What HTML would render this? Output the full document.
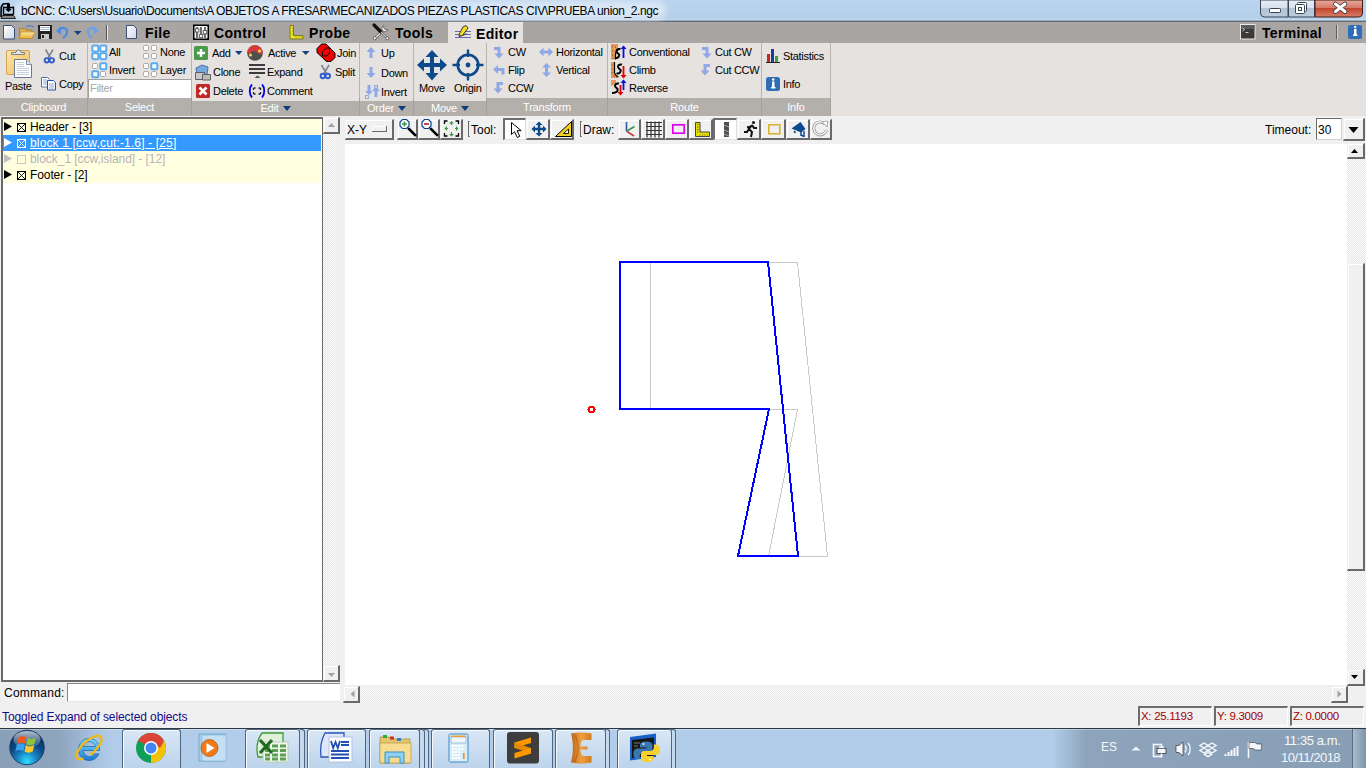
<!DOCTYPE html>
<html><head><meta charset="utf-8">
<style>
*{box-sizing:border-box}
html,body{margin:0;padding:0}
body{width:1366px;height:768px;position:relative;overflow:hidden;background:#f0f0f0;font-family:"Liberation Sans",sans-serif;font-size:12px;color:#000}
.a{position:absolute}
.t{position:absolute;white-space:nowrap;line-height:14px}
#title{left:0;top:0;width:1366px;height:22px;background:linear-gradient(to bottom,#bcd5ee 0,#b3cfea 19px,#d8e6f3 20px,#5f6b78 21px,#5f6b78 22px)}
#tabs{left:0;top:22px;width:1366px;height:21px;background:#a9a5a2}
#ribbon{left:0;top:43px;width:1366px;height:73px;background:#e6e2df}
.glabel{position:absolute;top:98px;height:18px;background:#b3afab;color:#fff;text-align:center;line-height:18px;font-size:11px;letter-spacing:-0.2px}
.gsep{position:absolute;top:43px;width:1px;height:73px;background:linear-gradient(#b8b4b0 0,#b8b4b0 55px,#a4a09c 55px)}
.tri{font-size:10px}
.tab{position:absolute;font-weight:bold;font-size:14px;line-height:16px;white-space:nowrap;letter-spacing:0.35px}
.rb{position:absolute;white-space:nowrap;line-height:14px;font-size:11px;letter-spacing:-0.3px}
.btn3d{position:absolute;background:#f0f0f0;border-top:1px solid #f0f0f0;border-left:1px solid #f0f0f0;border-right:2px solid #696969;border-bottom:2px solid #696969;box-shadow:inset 1px 1px 0 #fff}
.sunk{position:absolute;background:#fff;border-top:2px solid #696969;border-left:2px solid #696969;border-right:1px solid #f0f0f0;border-bottom:1px solid #f0f0f0}
.trough{position:absolute;background-color:#f4f4f4;background-image:repeating-conic-gradient(#e8e8e8 0 25%,#fafafa 0 50%);background-size:2px 2px}
.row{position:absolute;left:3px;width:318px;height:16px;line-height:16px;white-space:nowrap}
#taskbar{left:0;top:728px;width:1366px;height:40px;background:linear-gradient(to right,#8ea4bb 0px,#9cb6d1 40px,#b0cce9 75px,#b0cce9 1080px,#8ca2b9 1110px,#899fb6 1366px);border-top:1px solid #3b4856}
.tb{position:absolute;top:729px;height:39px;border:1px solid #4f6580;border-bottom:none;border-radius:3px 3px 0 0;background:linear-gradient(#d9e7f5,#bcd4ec);box-shadow:inset 1px 1px 0 rgba(255,255,255,0.8)}
.tbs{position:absolute;top:729px;height:39px;border:1px solid #4f6580;border-left:none;border-bottom:none;border-radius:0 3px 0 0;background:#c4d8ee}
.tbtn{position:absolute;top:729px;height:39px;border:1px solid #5e7694;border-radius:3px;background:linear-gradient(#cfe0f1,#b9d2ec)}
</style></head><body>

<!-- Title bar -->
<div id="title" class="a"></div>
<div class="a" style="left:14px;top:1px;width:652px;height:19px;border-radius:9px;background:rgba(228,238,248,0.75);filter:blur(3px)"></div>
<div class="t" style="left:21px;top:4px;font-size:12px;letter-spacing:-0.39px;color:#000">bCNC: C:\Users\Usuario\Documents\A OBJETOS A FRESAR\MECANIZADOS PIEZAS PLASTICAS CIV\PRUEBA union_2.ngc</div>

<!-- Tab bar -->
<div id="tabs" class="a"></div>
<div class="tab" style="left:145px;top:25px">File</div>
<div class="tab" style="left:214px;top:25px">Control</div>
<div class="tab" style="left:309px;top:25px">Probe</div>
<div class="tab" style="left:395px;top:25px">Tools</div>
<div class="a" style="left:448px;top:22px;width:75px;height:21px;background:#e6e2df"></div>
<div class="tab" style="left:476px;top:26px">Editor</div>
<div class="tab" style="left:1262px;top:25px">Terminal</div>

<!-- Ribbon -->
<div id="ribbon" class="a"></div>
<div class="glabel" style="left:0;width:87px">Clipboard</div>
<div class="glabel" style="left:88px;width:103px">Select</div>
<div class="glabel" style="left:192px;width:167px;top:101px;height:15px;line-height:14px">Edit<span style="display:inline-block;width:0;height:0;border-left:4px solid transparent;border-right:4px solid transparent;border-top:5px solid #0d3c7c;vertical-align:1px;margin-left:4px"></span></div>
<div class="glabel" style="left:360px;width:53px;top:101px;height:15px;line-height:14px">Order<span style="display:inline-block;width:0;height:0;border-left:4px solid transparent;border-right:4px solid transparent;border-top:5px solid #0d3c7c;vertical-align:1px;margin-left:4px"></span></div>
<div class="glabel" style="left:414px;width:72px;top:101px;height:15px;line-height:14px">Move<span style="display:inline-block;width:0;height:0;border-left:4px solid transparent;border-right:4px solid transparent;border-top:5px solid #0d3c7c;vertical-align:1px;margin-left:4px"></span></div>
<div class="glabel" style="left:487px;width:120px">Transform</div>
<div class="glabel" style="left:608px;width:153px">Route</div>
<div class="glabel" style="left:762px;width:68px">Info</div>
<div class="gsep" style="left:87px"></div>
<div class="gsep" style="left:191px"></div>
<div class="gsep" style="left:359px"></div>
<div class="gsep" style="left:413px"></div>
<div class="gsep" style="left:486px"></div>
<div class="gsep" style="left:607px"></div>
<div class="gsep" style="left:761px"></div>
<div class="gsep" style="left:830px"></div>

<div class="rb" style="left:5px;top:79px">Paste</div>
<div class="rb" style="left:59px;top:49px">Cut</div>
<div class="rb" style="left:59px;top:77px">Copy</div>
<div class="rb" style="left:109px;top:45px">All</div>
<div class="rb" style="left:160px;top:45px">None</div>
<div class="rb" style="left:109px;top:63px">Invert</div>
<div class="rb" style="left:160px;top:63px">Layer</div>
<div class="a" style="left:88px;top:79px;width:103px;height:19px;background:#fff;border-top:1px solid #a0a0a0;border-left:1px solid #a0a0a0"></div>
<div class="rb" style="left:90px;top:81px;color:#a8a8a8">Filter</div>

<div class="rb" style="left:212px;top:46px">Add</div>
<div class="rb" style="left:268px;top:46px">Active</div>
<div class="rb" style="left:337px;top:46px">Join</div>
<div class="rb" style="left:213px;top:65px">Clone</div>
<div class="rb" style="left:267px;top:65px">Expand</div>
<div class="rb" style="left:335px;top:65px">Split</div>
<div class="rb" style="left:213px;top:84px">Delete</div>
<div class="rb" style="left:267px;top:84px">Comment</div>

<div class="rb" style="left:381px;top:46px">Up</div>
<div class="rb" style="left:381px;top:66px">Down</div>
<div class="rb" style="left:381px;top:85px">Invert</div>
<div class="rb" style="left:419px;top:81px">Move</div>
<div class="rb" style="left:454px;top:81px">Origin</div>

<div class="rb" style="left:508px;top:45px">CW</div>
<div class="rb" style="left:556px;top:45px">Horizontal</div>
<div class="rb" style="left:508px;top:63px">Flip</div>
<div class="rb" style="left:556px;top:63px">Vertical</div>
<div class="rb" style="left:508px;top:81px">CCW</div>

<div class="rb" style="left:629px;top:45px">Conventional</div>
<div class="rb" style="left:715px;top:45px">Cut CW</div>
<div class="rb" style="left:629px;top:63px">Climb</div>
<div class="rb" style="left:715px;top:63px">Cut CCW</div>
<div class="rb" style="left:629px;top:81px">Reverse</div>
<div class="rb" style="left:783px;top:49px">Statistics</div>
<div class="rb" style="left:783px;top:77px">Info</div>

<!-- main area -->
<div class="a" style="left:1px;top:117px;width:322px;height:565px;background:#fff;border:2px solid #696969;border-right-width:1px"></div>
<div class="a" style="left:3px;top:119px;width:318px;height:64px;background:#ffffe0"></div>
<div class="a" style="left:3px;top:135px;width:318px;height:16px;background:#3399ff"></div>
<div class="t" style="left:30px;top:120px;font-size:12px;letter-spacing:-0.1px">Header - [3]</div>
<div class="t" style="left:30px;top:136px;font-size:12px;letter-spacing:0.15px;color:#fff;text-decoration:underline">block 1 [ccw,cut:-1.6] - [25]</div>
<div class="t" style="left:30px;top:152px;font-size:12px;letter-spacing:-0.05px;color:#b8b4b8">block_1 [ccw,island] - [12]</div>
<div class="t" style="left:30px;top:168px;font-size:12px;letter-spacing:-0.1px">Footer - [2]</div>

<!-- tree scrollbar -->
<div class="trough" style="left:323px;top:117px;width:17px;height:565px"></div>
<div class="btn3d" style="left:323px;top:117px;width:17px;height:17px"></div>
<div class="btn3d" style="left:323px;top:665px;width:17px;height:17px"></div>

<!-- canvas toolbar -->
<div class="btn3d" style="left:345px;top:119px;width:49px;height:21px"></div>
<div class="t" style="left:347px;top:123px;font-size:12px">X-Y</div>
<div class="btn3d" style="left:397px;top:119px;width:21px;height:21px"></div>
<div class="btn3d" style="left:418px;top:119px;width:22px;height:21px"></div>
<div class="btn3d" style="left:440px;top:119px;width:23px;height:21px"></div>
<div class="t" style="left:471px;top:123px;font-size:12px">Tool:</div>
<div class="a" style="left:503px;top:118px;width:23px;height:22px;background:#fff;border-top:2px solid #6d6d6d;border-left:2px solid #6d6d6d;border-bottom:1px solid #e0e0e0;border-right:1px solid #e0e0e0"></div>
<div class="btn3d" style="left:526px;top:119px;width:24px;height:21px"></div>
<div class="btn3d" style="left:550px;top:119px;width:24px;height:21px"></div>
<div class="t" style="left:583px;top:123px;font-size:12px">Draw:</div>
<div class="btn3d" style="left:618px;top:119px;width:23px;height:21px"></div>
<div class="btn3d" style="left:641px;top:119px;width:24px;height:21px"></div>
<div class="btn3d" style="left:665px;top:119px;width:24px;height:21px"></div>
<div class="btn3d" style="left:689px;top:119px;width:24px;height:21px"></div>
<div class="a" style="left:713px;top:118px;width:24px;height:22px;background:#fff;border-top:2px solid #6d6d6d;border-left:2px solid #6d6d6d;border-bottom:1px solid #e0e0e0;border-right:1px solid #e0e0e0"></div>
<div class="btn3d" style="left:737px;top:119px;width:24px;height:21px"></div>
<div class="btn3d" style="left:761px;top:119px;width:25px;height:21px"></div>
<div class="btn3d" style="left:786px;top:119px;width:24px;height:21px"></div>
<div class="btn3d" style="left:810px;top:119px;width:22px;height:21px"></div>
<div class="t" style="left:1265px;top:123px;font-size:12px">Timeout:</div>
<div class="a" style="left:1316px;top:118px;width:26px;height:22px;background:#fff;border-top:1px solid #6d6d6d;border-left:1px solid #6d6d6d;border-bottom:1px solid #d0d0d0;border-right:1px solid #d0d0d0"></div>
<div class="t" style="left:1318px;top:123px;font-size:12px">30</div>
<div class="btn3d" style="left:1343px;top:118px;width:22px;height:23px"></div>

<!-- canvas -->
<div class="a" style="left:345px;top:144px;width:1002px;height:541px;background:#fff"></div>
<!-- canvas v scrollbar -->
<div class="trough" style="left:1347px;top:143px;width:18px;height:543px"></div>
<div class="btn3d" style="left:1347px;top:143px;width:18px;height:16px"></div>
<div class="btn3d" style="left:1347px;top:263px;width:18px;height:308px"></div>
<div class="btn3d" style="left:1347px;top:669px;width:18px;height:17px"></div>
<!-- canvas h scrollbar -->
<div class="trough" style="left:343px;top:686px;width:1005px;height:17px"></div>
<div class="btn3d" style="left:343px;top:686px;width:17px;height:17px"></div>
<div class="btn3d" style="left:1331px;top:686px;width:17px;height:17px"></div>

<!-- command -->
<div class="t" style="left:4px;top:686px;font-size:12px;letter-spacing:0.25px">Command:</div>
<div class="a" style="left:67px;top:683px;width:273px;height:19px;background:#fff;border-top:1px solid #868686;border-left:1px solid #868686;border-bottom:1px solid #e8e8e8"></div>

<!-- status -->
<div class="t" style="left:2px;top:710px;font-size:12px;letter-spacing:-0.1px;color:#140a8a">Toggled Expand of selected objects</div>
<div class="a" style="left:1138px;top:706px;width:74px;height:20px;border-top:2px solid #6d6d6d;border-left:2px solid #6d6d6d;border-right:1px solid #fff;border-bottom:1px solid #fff"></div>
<div class="a" style="left:1214px;top:706px;width:74px;height:20px;border-top:2px solid #6d6d6d;border-left:2px solid #6d6d6d;border-right:1px solid #fff;border-bottom:1px solid #fff"></div>
<div class="a" style="left:1290px;top:706px;width:74px;height:20px;border-top:2px solid #6d6d6d;border-left:2px solid #6d6d6d;border-right:1px solid #fff;border-bottom:1px solid #fff"></div>
<div class="t" style="left:1141px;top:709px;font-size:11.5px;letter-spacing:-0.3px;color:#a00000">X: 25.1193</div>
<div class="t" style="left:1217px;top:709px;font-size:11.5px;letter-spacing:-0.3px;color:#a00000">Y: 9.3009</div>
<div class="t" style="left:1293px;top:709px;font-size:11.5px;letter-spacing:-0.3px;color:#a00000">Z: 0.0000</div>

<!-- taskbar -->
<div class="a" style="left:0;top:728px;width:1366px;height:40px;background:linear-gradient(to right,#8aa0b8 0px,#8ea5bd 60px,#a7c2df 95px,#b1cde9 115px,#b1cde9 1052px,#8ea4bc 1086px,#889eb5 1366px)"></div>
<div class="a" style="left:0;top:728px;width:1366px;height:1px;background:#2c3742"></div>
<div class="a" style="left:0;top:729px;width:1366px;height:1px;background:rgba(255,255,255,0.35)"></div>
<div class="tb" style="left:122px;width:59px"></div>
<div class="tbs" style="left:300px;width:5px"></div>
<div class="tb" style="left:245px;width:55px"></div>
<div class="tb" style="left:307px;width:59px"></div>
<div class="tbs" style="left:423px;width:6px"></div>
<div class="tbs" style="left:419px;width:6px"></div>
<div class="tb" style="left:369px;width:51px"></div>
<div class="tb" style="left:431px;width:59px"></div>
<div class="tb" style="left:493px;width:60px"></div>
<div class="tbs" style="left:605px;width:5px"></div>
<div class="tb" style="left:555px;width:51px"></div>
<div class="tbs" style="left:671px;width:5px"></div>
<div class="tb" style="left:617px;width:55px"></div>
<div class="a" style="left:1352px;top:729px;width:14px;height:39px;border-left:1px solid #5e6f80;background:linear-gradient(to right,#a9bccf,#7f94aa)"></div>
<div class="t" style="left:1101px;top:740px;font-size:12px;color:#f4f8fc">ES</div>
<div class="t" style="left:1284px;top:734px;font-size:13px;color:#f4f8fc;letter-spacing:-0.4px">11:35 a.m.</div>
<div class="t" style="left:1281px;top:751px;font-size:13px;color:#f4f8fc;letter-spacing:-0.5px">10/11/2018</div>
<svg class="a" style="left:0;top:0" width="1366" height="768" viewBox="0 0 1366 768">
<defs>
<radialGradient id="orb" cx="0.5" cy="0.9" r="0.75"><stop offset="0" stop-color="#30e0f8"/><stop offset="0.35" stop-color="#1a8ac8"/><stop offset="0.7" stop-color="#0c4a88"/><stop offset="1" stop-color="#0a3060"/></radialGradient>
<linearGradient id="orbhi" x1="0" y1="0" x2="0" y2="1"><stop offset="0" stop-color="#fff" stop-opacity="0.7"/><stop offset="1" stop-color="#fff" stop-opacity="0.05"/></linearGradient>
<linearGradient id="ieg" x1="0" y1="0" x2="0" y2="1"><stop offset="0" stop-color="#7ee0ff"/><stop offset="1" stop-color="#1a78d0"/></linearGradient>
<linearGradient id="eg" x1="0" y1="0" x2="1" y2="0"><stop offset="0" stop-color="#b8641a"/><stop offset="0.5" stop-color="#f0a040"/><stop offset="1" stop-color="#d07a20"/></linearGradient>
</defs>
<!-- start orb -->
<circle cx="27" cy="747.5" r="18" fill="#c8d8e8" opacity="0.35"/>
<circle cx="27" cy="747.5" r="17.3" fill="url(#orb)" stroke="#1d3f66" stroke-width="1"/>
<ellipse cx="27" cy="739.5" rx="13.5" ry="8.5" fill="url(#orbhi)"/>
<path d="M18.5 737.5c2.6-1.6 5.4-1.6 8 0l-1.3 6.3c-2.6-1.5-5.4-1.5-8 0z" fill="#f0581c"/>
<path d="M27.5 738c2.8 1.6 5.6 1.6 8.4-0.3l-1.3 6.3c-2.8 1.8-5.6 1.8-8.4 0.3z" fill="#8cc43a"/>
<path d="M16.8 744.8c2.6-1.6 5.4-1.6 8 0l-1.3 6.3c-2.6-1.5-5.4-1.5-8 0z" fill="#38a0ec"/>
<path d="M25.8 745.3c2.8 1.6 5.6 1.6 8.4-0.3l-1.3 6.3c-2.8 1.8-5.6 1.8-8.4 0.3z" fill="#fcc828"/>
<!-- IE -->
<path d="M99.5 750.5h-16.5c0.6 3.6 3 6 6.3 6 2.2 0 3.8-1 4.9-2.6h4.8c-1.8 4-5.6 6.6-9.9 6.6-5.9 0-10.6-4.9-10.6-11s4.7-11 10.6-11 10.6 4.9 10.6 11c0 0.3 0 0.7-0.2 1z M83.2 746.5h12.2c-0.8-3-3.2-5-6.1-5s-5.3 2-6.1 5z" fill="url(#ieg)" stroke="#1a60b0" stroke-width="0.7"/>
<ellipse cx="89" cy="747.5" rx="16" ry="6.5" transform="rotate(-42 89 747.5)" fill="none" stroke="#f2b80c" stroke-width="2.2" stroke-dasharray="62 8" stroke-dashoffset="-30"/>
<!-- chrome -->
<circle cx="151" cy="748" r="15" fill="#0f9d58"/>
<path d="M151 748L138 740.5A15 15 0 0 1 164 740.5z" fill="#db4437"/>
<path d="M151 748L164 740.5A15 15 0 0 1 151 763z" fill="#f4c20d"/>
<path d="M151 741.5h13L160 748z" fill="#db4437"/>
<circle cx="151" cy="748" r="7" fill="#fff"/>
<circle cx="151" cy="748" r="5.5" fill="#4285f4"/>
<!-- WMP -->
<rect x="199" y="734" width="26" height="27" fill="#a8d0ec" stroke="#6aa0c8" stroke-width="0.8"/>
<rect x="202" y="735" width="24" height="26" fill="#c4e0f4" stroke="#7ab0d4" stroke-width="0.6"/>
<circle cx="209.5" cy="748" r="8.5" fill="#f07a18" stroke="#c05a08" stroke-width="0.8"/>
<path d="M206.5 743v10l8-5z" fill="#fff"/>
<!-- excel -->
<path d="M262 733h21v24h-25c-2-8-1-17 4-24z" fill="#e2efdc" stroke="#3c9a32" stroke-width="1.3"/>
<path d="M263 742h25v20h-25z" fill="#f0f5ec" stroke="#b0c8a8" stroke-width="0.8"/>
<path d="M265 746h5M272 746h6M280 746h6M265 750.5h5M272 750.5h6M280 750.5h6M265 755h5M272 755h6M280 755h6M265 759h5M272 759h6M280 759h6" stroke="#5aa050" stroke-width="3"/>
<path d="M260 740l12 13M272 740l-12 13" stroke="#1f6a1f" stroke-width="3.2"/>
<!-- word -->
<path d="M325 733h19v24h-23c-1-8 0-17 4-24z" fill="#dfe7fa" stroke="#2a55b8" stroke-width="1.3"/>
<path d="M329 737h23v25h-23z" fill="#fbfcff" stroke="#a8b8d8" stroke-width="0.8"/>
<path d="M331 741l2.2 7 2.3-6 2.3 6 2.2-7" fill="none" stroke="#2050b0" stroke-width="1.8"/>
<path d="M341 742h8M341 745h8M331 751h18M331 754.5h18M331 758h18" stroke="#2050b0" stroke-width="1.8"/>
<!-- folder -->
<path d="M380 737h9l2 2h19v24h-30z" fill="#e6c46a" stroke="#a88a3a" stroke-width="0.7"/>
<rect x="383" y="735" width="4" height="3" fill="#30b030"/><rect x="390" y="736.5" width="4" height="3" fill="#d03020"/><rect x="397" y="738" width="4" height="3" fill="#3080d0"/>
<path d="M380 743h31v20h-31z" fill="#f6dd92" stroke="#b89a48" stroke-width="0.7"/>
<path d="M385 752h19v11h-4v-6h-11v6h-4z" fill="#8fd0f0" stroke="#3a90c8" stroke-width="1"/>
<!-- calc -->
<rect x="449" y="734" width="19" height="28" rx="1.5" fill="#d8ecf8" stroke="#3a8ac8" stroke-width="1"/>
<rect x="451" y="737" width="15" height="6" fill="#f0f6fa" stroke="#7aa8c8" stroke-width="0.6"/>
<rect x="451" y="735.5" width="15" height="1.5" fill="#f0a030"/>
<path d="M452 746h2M455 746h2M458 746h2M461 746h2M452 749h2M455 749h2M458 749h2M461 749h2M452 752h2M455 752h2M458 752h2M452 755h2M455 755h2M458 755h2M452 758h2M455 758h2M458 758h2" stroke="#fff" stroke-width="2"/>
<rect x="463" y="753" width="1.6" height="6" fill="#f09020"/>
<!-- sublime -->
<rect x="507" y="732" width="32" height="31.5" rx="3" fill="#3e3e3e"/>
<path d="M514.5 742.5L531 737.5V743L514.5 748Z" fill="#ff9800"/>
<path d="M514.5 742.5L531 748V753.5L514.5 748Z" fill="#e88a00"/>
<path d="M514.5 753L531 748V753.5L514.5 758.5Z" fill="#ff9800"/>
<!-- E -->
<path d="M571 733.5c7-1.5 14-1.5 20.5 0v6.5h-8.5c-2 1.5-2.5 4-2.5 6.5h7v3h-7c0 2.5 0.5 5 2.5 6.5h8.5v6.5c-6.5 1.5-13.5 1.5-20.5 0 2.5-9.5 2.5-20 0-29z" fill="url(#eg)"/>
<path d="M575 735c3 6 4 14 2 20s-2 6-1 7" fill="none" stroke="#9a5010" stroke-width="1" opacity="0.6"/>
<!-- python -->
<path d="M630 737l26-3.5v23.5l-26 3.5z" fill="#1860c8"/>
<path d="M632 740l22-2.5v18l-22 2.5z" fill="#161616"/>
<path d="M634 743h6M634 746h4" stroke="#777" stroke-width="1"/>
<path d="M646.5 741.5c-5 0-6.5 1.5-6.5 3.5v2.5h6.5v1h-9c-2.5 0-4.2 2-4.2 5.2s1.7 5.3 4.2 5.3h2.2v-3c0-2 1.6-3.6 3.6-3.6h6c2 0 3.2-1.2 3.2-3.2v-4.2c0-2-2-3.5-6-3.5z" fill="#3a76b0"/>
<path d="M647 762c5 0 6.5-1.5 6.5-3.5v-2.5h-6.5v-1h9c2.5 0 4.2-2 4.2-5.2s-1.7-5.3-4.2-5.3h-2.2v3c0 2-1.6 3.6-3.6 3.6h-6c-2 0-3.2 1.2-3.2 3.2v4.2c0 2 2 3.5 6 3.5z" fill="#f8d030"/>
<circle cx="643.5" cy="744" r="0.9" fill="#fff"/><circle cx="650" cy="759.5" r="0.9" fill="#fff"/>
<!-- tray icons -->
<path d="M1131.5 750.5l4.5-4 4.5 4z" fill="#f0f4f8"/>
<rect x="1153.5" y="744.5" width="8" height="12" fill="none" stroke="#f4f8fc" stroke-width="1.6"/>
<path d="M1157 748.5h9v5h-9z" fill="#f4f8fc" stroke="#333" stroke-width="0.8"/>
<path d="M1160 746v2.5M1163 746v2.5M1161.5 753.5v4" stroke="#f4f8fc" stroke-width="1.3"/>
<path d="M1176 745.5h3l4-3.5v14l-4-3.5h-3z" fill="#f4f8fc" stroke="#333" stroke-width="0.7"/>
<path d="M1185 745.5c1.5 1.5 1.5 5 0 7M1188 743c3 3 3 9 0 12" fill="none" stroke="#f4f8fc" stroke-width="1.3"/>
<path d="M1204 743l4 2.5-4 2.5-4-2.5zM1212 743l4 2.5-4 2.5-4-2.5zM1204 748l4 2.5-4 2.5-4-2.5zM1212 748l4 2.5-4 2.5-4-2.5zM1208 752.5l3.5 2-3.5 2.2-3.5-2.2z" fill="none" stroke="#f4f8fc" stroke-width="1.4"/>
<path d="M1225.5 756v-2M1228.5 756v-4M1231.5 756v-6M1234.5 756v-8M1237.5 756v-10" stroke="#f4f8fc" stroke-width="2"/>
<path d="M1248.5 758v-16" stroke="#f4f8fc" stroke-width="1.6"/>
<path d="M1249 742.5h6l2 1.5h5c-1 2.5-1 4 0 6h-7l-2-1.5h-4z" fill="#f4f8fc" stroke="#333" stroke-width="0.6"/>
</svg>
<!-- ICONS1 --><svg class="a" style="left:0;top:0" width="1366" height="768" viewBox="0 0 1366 768" shape-rendering="geometricPrecision">
<defs>
<linearGradient id="gmin" x1="0" y1="0" x2="0" y2="1"><stop offset="0" stop-color="#e6edf5"/><stop offset="0.45" stop-color="#d8e2ee"/><stop offset="0.5" stop-color="#b4c4d6"/><stop offset="1" stop-color="#bccbdc"/></linearGradient>
<linearGradient id="gclose" x1="0" y1="0" x2="0" y2="1"><stop offset="0" stop-color="#e9aa9c"/><stop offset="0.45" stop-color="#d77b68"/><stop offset="0.5" stop-color="#c2452f"/><stop offset="1" stop-color="#d9806a"/></linearGradient>
<linearGradient id="gfold" x1="0" y1="0" x2="0" y2="1"><stop offset="0" stop-color="#fbe6a0"/><stop offset="1" stop-color="#e9ad2e"/></linearGradient>
<linearGradient id="gpage" x1="0" y1="0" x2="1" y2="1"><stop offset="0" stop-color="#fff"/><stop offset="1" stop-color="#d2d8ea"/></linearGradient>
</defs>
<!-- app icon -->
<path d="M1 17 L1.2 7 L3 4 L9 3.5" fill="none" stroke="#000" stroke-width="1.6"/>
<path d="M3.5 6.5v8M13.5 6.5v8M3.5 7.5h10M3.5 14.5h10" fill="none" stroke="#000" stroke-width="1.4"/>
<path d="M7 3.5h3v5l1.5 1 -3 2.5 -3-2.5 1.5-1z" fill="#000"/>
<path d="M2.5 15.5h11l2 3h-14.5z" fill="#8a8683" stroke="#000" stroke-width="0.8"/>
<!-- window buttons -->
<path d="M1260.5 0v13a4 4 0 0 0 4 4h23.5V0z" fill="url(#gmin)" stroke="#394756" stroke-width="1"/>
<path d="M1288.5 0v17h26V0z" fill="url(#gmin)" stroke="#394756" stroke-width="1"/>
<path d="M1315 0v17h43.5a4 4 0 0 0 4-4V0z" fill="url(#gclose)" stroke="#3e1d16" stroke-width="1"/>
<rect x="1269.5" y="8.5" width="11" height="4" rx="0.8" fill="#fff" stroke="#3a4552" stroke-width="1"/>
<rect x="1297.5" y="2.5" width="9" height="9" rx="1" fill="#fff" stroke="#3a4552" stroke-width="1"/>
<rect x="1295.5" y="4.5" width="9" height="9" rx="1" fill="#fff" stroke="#3a4552" stroke-width="1"/>
<rect x="1298.5" y="7.5" width="3" height="3" fill="none" stroke="#3a4552" stroke-width="1"/>
<path d="M1335.5 4l9.5 7.5M1345 4l-9.5 7.5" stroke="#3a3a40" stroke-width="4.6" stroke-linecap="round"/>
<path d="M1335.5 4l9.5 7.5M1345 4l-9.5 7.5" stroke="#fff" stroke-width="3" stroke-linecap="round"/>
<!-- tab bar icons -->
<path d="M3.5 25.5h8l3 3v10.5h-11z" fill="url(#gpage)" stroke="#3d4f6e" stroke-width="1"/>
<path d="M19.5 28.5h5l1.5 1.5h6v8.5h-12.5z" fill="#e0b050" stroke="#9a7a30" stroke-width="0.8"/>
<path d="M21 32h14l-3 6.5h-13z" fill="url(#gfold)" stroke="#b08a30" stroke-width="0.6"/>
<path d="M26 27.5c2-2.5 6-2.5 8 0" fill="none" stroke="#5a7ec0" stroke-width="1.2"/>
<rect x="38" y="25" width="14" height="14" fill="#222"/>
<rect x="40" y="26" width="10" height="5" fill="#fff"/>
<path d="M40.5 27.5h9M40.5 29.5h9" stroke="#8aa8c8" stroke-width="0.8"/>
<rect x="41" y="34" width="8" height="5" fill="#c8c8c8"/><rect x="42" y="35" width="2" height="3" fill="#222"/>
<path d="M59 29.5c4-3.5 9-1 8 3.5 -0.5 2.5 -2.5 4 -4 5" fill="none" stroke="#4a8ae8" stroke-width="2.2"/>
<path d="M56 31l5-4.5v8z" fill="#4a8ae8"/>
<path d="M74 31h7.5l-3.75 4z" fill="#123e7c"/>
<path d="M96 29.5c-4-3.5-9-1-8 3.5 0.5 2.5 2.5 4 4 5" fill="none" stroke="#6aa0ec" stroke-width="2.2"/>
<path d="M99 31l-5-4.5v8z" fill="#6aa0ec"/>
<path d="M106.5 25v15" stroke="#555" stroke-width="1"/><path d="M107.5 25v15" stroke="#e8e8e8" stroke-width="1"/>
<path d="M126.5 25.5h7l3 3v10h-10z" fill="url(#gpage)" stroke="#3d4f6e" stroke-width="1"/>
<!-- control icon -->
<rect x="193" y="24.5" width="16" height="15.5" fill="#000"/>
<rect x="194.5" y="26" width="13" height="12.5" rx="1.2" fill="#f4f4f4"/>
<path d="M197 27v11M201 27v11M205 27v11" stroke="#606060" stroke-width="1.8"/>
<rect x="195.5" y="28.8" width="3.4" height="3.2" fill="#fff" stroke="#555" stroke-width="0.9"/>
<rect x="199.3" y="34.4" width="3.4" height="3.2" fill="#fff" stroke="#555" stroke-width="0.9"/>
<rect x="203.3" y="30.6" width="3.4" height="3.2" fill="#fff" stroke="#555" stroke-width="0.9"/>
<!-- probe icon (ruler L) -->
<path d="M290 25.5h3.5v10h9.5v3.5h-13z" fill="#e8e020" stroke="#6a6a10" stroke-width="0.8"/>
<path d="M292.5 28h1M292.5 31h1M292.5 34h1M296 36.5v1M299 36.5v1M302 36.5v1" stroke="#555" stroke-width="0.8"/>
<!-- tools icon -->
<path d="M383 31l-8 7" stroke="#666" stroke-width="2.6"/><path d="M383 31l-8 7" stroke="#e8e8e8" stroke-width="1.2"/>
<circle cx="374.8" cy="38.2" r="1.6" fill="#fff" stroke="#555" stroke-width="0.9"/>
<path d="M384 25.5a3.2 3.2 0 1 0 4 4l-2 0.5-2.5-2.5z" fill="#e0e0e0" stroke="#666" stroke-width="0.9"/>
<path d="M374 25l7 7" stroke="#111" stroke-width="3.2" stroke-linecap="round"/>
<path d="M381 32l6 6" stroke="#777" stroke-width="1.8"/><path d="M381 32l6 6" stroke="#eee" stroke-width="0.7"/>
<circle cx="387.3" cy="38.3" r="1.5" fill="#fff" stroke="#555" stroke-width="0.9"/>
<!-- editor icon -->
<path d="M455 31.5h16M455 34.5h16M455 37.5h16" stroke="#5a5aa8" stroke-width="0.9"/>
<path d="M463 27l3-1.5 2 2.5 -5.5 7.5 -3.5 1 0.5-3z" fill="#f5e020" stroke="#222" stroke-width="0.9"/>
<path d="M460 36l4 -1 2.5 -1.5" stroke="#555" stroke-width="1"/>
<!-- terminal icon -->
<rect x="1240" y="24" width="15.5" height="15.5" fill="#e8e8e8"/>
<rect x="1241" y="25" width="13.5" height="13.5" fill="#3a3a3a"/>
<rect x="1241" y="25" width="13.5" height="4" fill="#5a5a5a"/>
<path d="M1242.5 28l2 1.5-2 1.5M1245.5 32.5h3" stroke="#f0f0f0" stroke-width="0.8" fill="none"/>
<path d="M1336.5 25v14" stroke="#5a5a5a" stroke-width="1"/><path d="M1337.5 25v14" stroke="#d6d6d6" stroke-width="1"/>
<rect x="1348" y="25" width="14" height="14" rx="2" fill="#2f6eb5"/>
<rect x="1354" y="29" width="2.5" height="7" fill="#fff"/><circle cx="1355.2" cy="27" r="1.2" fill="#fff"/>
<rect x="1353" y="34.5" width="4.5" height="1.5" fill="#fff"/>
</svg>
<!-- /ICONS1 -->
<!-- ICONS2 --><svg class="a" style="left:0;top:0" width="1366" height="768" viewBox="0 0 1366 768">
<defs>
<linearGradient id="gclip" x1="0" y1="0" x2="1" y2="1"><stop offset="0" stop-color="#fde7a8"/><stop offset="1" stop-color="#f0bd5c"/></linearGradient>
<radialGradient id="gact" cx="0.4" cy="0.3" r="0.8"><stop offset="0" stop-color="#f06060"/><stop offset="1" stop-color="#b82020"/></radialGradient>
</defs>
<!-- paste -->
<rect x="6.5" y="50.5" width="23" height="24" rx="1.5" fill="url(#gclip)" stroke="#d2a256" stroke-width="1"/>
<path d="M11.5 54.5h13v-2h-3.5a2.5 2.5 0 0 0 -5 0h-4.5z" fill="#e8e8e8" stroke="#808080" stroke-width="1"/>
<path d="M14.5 59.5h12l5 5v13h-17z" fill="#fafcff" stroke="#6a7890" stroke-width="1"/>
<path d="M26.5 59.5v5h5" fill="#dde3ee" stroke="#6a7890" stroke-width="0.8"/>
<path d="M17 62.5h7M17 64.5h7M17 66.5h7M17 68.5h12M17 70.5h12M17 72.5h12M17 74.5h12" stroke="#b9c3d2" stroke-width="0.8"/>
<!-- cut -->
<path d="M45.5 49.5l5 8.5M53 49.5l-5 8.5" stroke="#7a8290" stroke-width="1.5"/>
<circle cx="46.8" cy="60.3" r="2.2" fill="none" stroke="#2f5cc8" stroke-width="1.9"/>
<circle cx="51.8" cy="60.3" r="2.2" fill="none" stroke="#2f5cc8" stroke-width="1.9"/>
<!-- copy -->
<path d="M41.5 77.5h6l2 2v7.5h-8z" fill="#fff" stroke="#5070b0" stroke-width="1"/>
<path d="M47.5 80.5h6l2 2v7.5h-8z" fill="#fff" stroke="#2050b0" stroke-width="1"/>
<path d="M43 80h4M43 82h4M43 84h4M49 84h5M49 86h5M49 88h5" stroke="#6f8fd0" stroke-width="0.8"/>
<!-- select icons -->
<g fill="#fff" stroke-width="1">
<g stroke="#5aaaf0" stroke-width="2"><rect x="92.3" y="45.5" width="6" height="6" rx="1"/><rect x="100.3" y="45.5" width="6" height="6" rx="1"/><rect x="92.3" y="53.3" width="6" height="6" rx="1"/><rect x="100.3" y="53.3" width="6" height="6" rx="1"/></g>
<g stroke="#a8a8a8"><rect x="143.5" y="45.5" width="5" height="5" rx="1.2"/><rect x="151.5" y="45.5" width="5" height="5" rx="1.2"/><rect x="143.5" y="53.5" width="5" height="5" rx="1.2"/><rect x="151.5" y="53.5" width="5" height="5" rx="1.2"/></g>
<g stroke="#a8a8a8"><rect x="92.5" y="63.5" width="5" height="5" rx="1.2"/><rect x="100.5" y="71.5" width="5" height="5" rx="1.2"/><rect x="143.5" y="63.5" width="5" height="5" rx="1.2"/><rect x="143.5" y="71.5" width="5" height="5" rx="1.2"/><rect x="151.5" y="71.5" width="5" height="5" rx="1.2"/></g>
<g stroke="#5aaaf0" stroke-width="2"><rect x="100.3" y="63.3" width="6" height="6" rx="1"/><rect x="92.3" y="71.3" width="6" height="6" rx="1"/><rect x="151.3" y="63.3" width="6" height="6" rx="1"/></g>
</g>
<!-- add -->
<rect x="194" y="46" width="14" height="14" rx="1.5" fill="#4a9a48"/>
<path d="M201 49v8M197 53h8" stroke="#fff" stroke-width="2.4"/>
<path d="M235 51h7.5l-3.75 4z" fill="#123e7c"/>
<!-- active -->
<circle cx="255" cy="53" r="7.8" fill="#505050"/>
<path d="M247.2 53a7.8 7.8 0 0 1 15.6 0c-2 1.5-4 1-5.5-0.5s-4-2-5.5-0.5 -3 1.5 -4.6 1z" fill="#d83a3a"/>
<circle cx="259.5" cy="51" r="1.5" fill="#f0e040"/><circle cx="250.5" cy="55" r="1.5" fill="#f0e040"/>
<path d="M302 51h7.5l-3.75 4z" fill="#123e7c"/>
<!-- join -->
<path d="M317 48.5L321.5 44H326L335 53V57.5L331 61.5H326.5L317 52.5Z" fill="#f00000" stroke="#000" stroke-width="1"/>
<path d="M322.5 51.5L326 48H329.5V53L326.5 56H322.5Z" fill="none" stroke="#000" stroke-width="0.9"/>
<!-- clone -->
<path d="M196 68l6-3 6 2-1 8h-10z" fill="#7aa8e0" stroke="#2e5c9a" stroke-width="0.8"/>
<path d="M195.5 72.5h9v7h-9z" fill="#c8c8c8" stroke="#555" stroke-width="0.9"/>
<path d="M202.5 74.5h8v5.5h-8z" fill="#bcbcbc" stroke="#555" stroke-width="0.9"/>
<!-- expand -->
<path d="M249 65h16M249 69h16M249 73h16" stroke="#3c3c3c" stroke-width="1.8"/>
<path d="M254.5 78h6l-3-2.5z" fill="#555"/>
<!-- split -->
<path d="M321.5 65l5 8.5M329 65l-5 8.5" stroke="#7a8290" stroke-width="1.5"/>
<circle cx="322.8" cy="76" r="2.2" fill="none" stroke="#2f5cc8" stroke-width="1.9"/>
<circle cx="327.8" cy="76" r="2.2" fill="none" stroke="#2f5cc8" stroke-width="1.9"/>
<!-- delete -->
<rect x="196" y="84" width="14" height="14" rx="1.5" fill="#c02828"/>
<path d="M199.5 87.5l7 7M206.5 87.5l-7 7" stroke="#fff" stroke-width="2.6"/>
<!-- comment -->
<path d="M252 84.5c-3 3 -3 10 0 13M262 84.5c3 3 3 10 0 13" fill="none" stroke="#0000e8" stroke-width="1.8"/>
<path d="M253.5 88h2M253.5 88v2M260.5 88h-2M260.5 88v2M253.5 94h2M253.5 94v-2M260.5 94h-2M260.5 94v-2" stroke="#222" stroke-width="1.3"/>
<!-- order -->
<path d="M371 47l-4.5 5h3v6h3v-6h3z" fill="#8ea8e8"/>
<path d="M371 78l-4.5-5h3v-6h3v6h3z" fill="#8ea8e8"/>
<path d="M367.5 85v6h-2.5l4 4 4-4h-2.5v-6z" fill="#8ea8e8"/>
<path d="M374.5 97v-6h-2.5l4-4 4 4h-2.5v6z" fill="#8ea8e8"/>
<rect x="374.5" y="85.5" width="3" height="3" fill="none" stroke="#8ea8e8" stroke-width="1"/>
<rect x="365.5" y="95.5" width="3" height="3" fill="none" stroke="#8ea8e8" stroke-width="1"/>
<!-- move -->
<path d="M432 50l-6.5 7h4.5v6h-6v-4.5l-7 6.5 7 6.5v-4.5h6v6h-4.5l6.5 7.5 6.5-7.5h-4.5v-6h6v4.5l7-6.5-7-6.5v4.5h-6v-6h4.5z" fill="#0d4a8c"/>
<!-- origin -->
<circle cx="468" cy="65" r="10.3" fill="none" stroke="#0d4a8c" stroke-width="2.6"/>
<path d="M468 49.5v7.5M468 73v7.5M452.5 65h7.5M476 65h7.5" stroke="#0d4a8c" stroke-width="2.4"/>
<circle cx="468" cy="65" r="2.4" fill="#0d4a8c"/>
<!-- transform -->
<path d="M494 47h6.5v6.5h3l-4.5 5 -4.5-5h3v-3.5h-3.5z" fill="#90a8e6"/>
<path d="M504 64h-6.5v6.5h-3l4.5 5 4.5-5h-3v-3.5h3.5z" fill="#90a8e6" transform="rotate(90 499 69.5)"/>
<path d="M503 82h-6.5v6.5h-3l4.5 5 4.5-5h-3v-3.5h3.5z" fill="#90a8e6"/>
<path d="M539 52l4.5-4.5v3h5v-3l4.5 4.5 -4.5 4.5v-3h-5v3z" fill="#90a8e6"/>
<path d="M546.5 63l4.5 4.5h-3v5h3l-4.5 4.5 -4.5-4.5h3v-5h-3z" fill="#90a8e6"/>
<!-- route -->
<g>
<path d="M611 44h7v6c-2 1-3 3-3 5v4.5h-4z" fill="#e39a58"/>
<path d="M612.5 45.5v2M615.5 46v2M612.5 50v2M612.5 54v2M613 57.5v1.5" stroke="#b8682a" stroke-width="1"/>
<path d="M618.5 49.5c-2 1-3 3-3 5.5v4.5" fill="none" stroke="#000" stroke-width="1.2"/>
<path d="M620.5 49c-3-0.5-5 1.5-3.5 3.5s3.5 2 1.5 4.5c-1 1-2.5 1.2-3.5 0.8" fill="none" stroke="#000" stroke-width="2"/>
<path d="M623.5 58v-10" stroke="#0010e0" stroke-width="1.8"/><path d="M620.5 49l3-3.5 3 3.5z" fill="#0010e0"/>
<path d="M611 62h3v11c1 2 2.5 3 4 3.5v1.5h-7z" fill="#e39a58"/>
<path d="M612 64v2M612 68v2M612 72v2M614 75v2M616.5 76.5v1" stroke="#b8682a" stroke-width="1"/>
<path d="M614.5 62v10.5c0.5 2.5 2 4 4 4.5" fill="none" stroke="#000" stroke-width="1.2"/>
<path d="M622 64.5c-3-0.5-5 1.5-3.5 3.5s3.5 2 1.5 4.5c-1 1-2.5 1.2-3.5 0.8" fill="none" stroke="#000" stroke-width="2"/>
<path d="M623.5 66v10" stroke="#e00000" stroke-width="1.8"/><path d="M620.5 75l3 3.5 3-3.5z" fill="#e00000"/>
<path d="M611 80h5v4c-2 0.5-3 1-4 2h-1z" fill="#e39a58"/>
<path d="M619 83.5c-3-0.5-5 1.5-3.5 3.5s3.5 2 1.5 4.5c-1 1-3 1.5-5 1.5" fill="none" stroke="#000" stroke-width="2"/>
<path d="M623.5 90v-8.5" stroke="#0010e0" stroke-width="1.8"/><path d="M620.5 83l3-3.5 3 3.5z" fill="#0010e0"/>
<path d="M620.5 85v8" stroke="#e00000" stroke-width="1.8"/><path d="M617.5 92l3 3.5 3-3.5z" fill="#e00000"/>
</g>
<path d="M702 47h6.5v6.5h3l-4.5 5 -4.5-5h3v-3.5h-3.5z" fill="#90a8e6"/>
<path d="M710 64h-6.5v6.5h-3l4.5 5 4.5-5h-3v-3.5h3.5z" fill="#90a8e6"/>
<!-- info group -->
<rect x="767" y="54" width="3" height="8" fill="#c02828"/><rect x="771" y="49" width="3" height="13" fill="#1a3c9a"/><rect x="775" y="56" width="3" height="6" fill="#40a040"/>
<path d="M766 62.5h14" stroke="#222" stroke-width="1"/>
<rect x="766" y="77" width="14" height="14" rx="2.5" fill="#2f6eb5"/>
<rect x="772" y="81.5" width="2.5" height="6.5" fill="#fff"/><circle cx="773.2" cy="79.5" r="1.3" fill="#fff"/>
<rect x="771" y="87" width="4.5" height="1.5" fill="#fff"/>
</svg>
<!-- /ICONS2 -->
<!-- ICONS3 --><svg class="a" style="left:0;top:0" width="1366" height="768" viewBox="0 0 1366 768">
<!-- X-Y indicator -->
<rect x="372" y="126" width="15" height="6" fill="#f0f0f0"/>
<path d="M372.5 131.5v-5h14" fill="none" stroke="#fff" stroke-width="1"/>
<path d="M372 131.5h15M386.5 126v6" fill="none" stroke="#6a6a6a" stroke-width="1"/>
<!-- zoom in -->
<path d="M409 129l6 6" stroke="#000" stroke-width="2.6" stroke-linecap="square"/>
<path d="M402.5 119.5h4l2.5 2.5v4l-2.5 2.5h-4l-2.5-2.5v-4z" fill="#fff" stroke="#0d3c8a" stroke-width="1.2"/>
<path d="M404.5 121.5v5M402 124h5" stroke="#3a9a3a" stroke-width="1.6"/>
<!-- zoom out -->
<path d="M431 129l6 6" stroke="#000" stroke-width="2.6" stroke-linecap="square"/>
<path d="M424.5 119.5h4l2.5 2.5v4l-2.5 2.5h-4l-2.5-2.5v-4z" fill="#fff" stroke="#0d3c8a" stroke-width="1.2"/>
<path d="M424 124h5" stroke="#b02020" stroke-width="1.6"/>
<!-- fit -->
<path d="M444.5 124v-3h3M455.5 121h3v3M458.5 133v3h-3M447.5 136h-3v-3" fill="none" stroke="#000" stroke-width="1.3"/>
<path d="M451.5 121l-2.5 2.5h5z M451.5 136.5l-2.5-2.5h5z M444.5 128.5l2.5-2.5v5z M458.5 128.5l-2.5-2.5v5z" fill="#3a9a3a"/>
<path d="M451.5 123v2M451.5 132v2M446 128.5h2M455 128.5h2" stroke="#3a9a3a" stroke-width="1.2"/>
<!-- separators -->
<path d="M468.5 121v16" stroke="#6a6a6a" stroke-width="1"/><path d="M469 121.5h1M469 136.5h1" stroke="#909090" stroke-width="1"/>
<path d="M580.5 121v16" stroke="#6a6a6a" stroke-width="1"/><path d="M581 121.5h1M581 136.5h1" stroke="#909090" stroke-width="1"/>
<!-- cursor -->
<path d="M511.5 122.5v12l3-2.8 2.8 5.8 2.5-1.2 -2.8-5.6h4.2z" fill="#fff" stroke="#000" stroke-width="1"/>
<!-- move arrows -->
<path d="M539 121.5l-3.5 3.5h2.3v2.8h-2.8v-2.3l-3.5 3.5 3.5 3.5v-2.3h2.8v2.8h-2.3l3.5 3.5 3.5-3.5h-2.3v-2.8h2.8v2.3l3.5-3.5 -3.5-3.5v2.3h-2.8v-2.8h2.3z" fill="#0d4a8c"/>
<!-- set square -->
<path d="M555.5 136.5l16-15v15z" fill="#f2d020" stroke="#000" stroke-width="1"/>
<path d="M563.5 133.5l5-4.5v4.5z" fill="#fff" stroke="#000" stroke-width="0.9"/>
<!-- axes -->
<path d="M626.5 122v9.5" stroke="#2a5aa0" stroke-width="1.6"/>
<path d="M627 131l7.5-4.5" stroke="#3a9a4a" stroke-width="1.6"/>
<path d="M627 131.5l7 4.5" stroke="#c83a3a" stroke-width="1.6"/>
<!-- grid -->
<path d="M647 121.5v16M651 121.5v16M655 121.5v16M659 121.5v16M646 122.5h16M646 126.5h16M646 130.5h16M646 134.5h16" stroke="#333" stroke-width="1.2"/>
<!-- magenta rect -->
<rect x="672.8" y="124.8" width="11.4" height="8.4" fill="none" stroke="#e000f0" stroke-width="1.7"/>
<!-- ruler -->
<path d="M695.5 122.5h4.5v9.5h9.5v4.5h-14z" fill="#e8e000" stroke="#333" stroke-width="0.9"/>
<path d="M697 124.5h1.5M697 127h1.5M697 129.5h1.5M697 132h1.5M700 134.5v1M702.5 134.5v1M705 134.5v1M707.5 134.5v1" stroke="#444" stroke-width="0.7"/>
<!-- mill -->
<rect x="724" y="122" width="5" height="15" fill="#505050"/>
<path d="M724 125l5 2M724 130l5 2M724 134l5 2" stroke="#b0b0b0" stroke-width="0.9"/>
<!-- running man -->
<circle cx="753.5" cy="122.5" r="1.5" fill="#111"/>
<path d="M752 125l-3 4 -2 3h-3M752 125l2 3h3M749 129l3 3 -1 5M751 126.5l-4 1" fill="none" stroke="#111" stroke-width="2"/>
<!-- yellow rect -->
<rect x="768.8" y="124.8" width="11" height="9" fill="none" stroke="#d8b020" stroke-width="1.5"/>
<!-- camera -->
<path d="M791.5 128.5l9-6.5 5 7 -4.5 3.5z" fill="#0d4a8c"/>
<path d="M794 131l1.5 2M801 131v5M801 135l3 1.5M804 131v6" stroke="#0d4a8c" stroke-width="1.5"/>
<!-- refresh -->
<path d="M825 124a6.5 6.5 0 1 0 1.5 6" fill="none" stroke="#9a9a9a" stroke-width="3"/>
<path d="M825 124a6.5 6.5 0 1 0 1.5 6" fill="none" stroke="#fff" stroke-width="1.2"/>
<path d="M822 121.5l6-0.5 -1 6z" fill="#fff" stroke="#9a9a9a" stroke-width="0.9"/>
<!-- timeout dropdown arrow -->
<path d="M1348.5 127h10l-5 6z" fill="#000"/>
<!-- scroll arrows -->
<path d="M328 127h7l-3.5-4z" fill="#a0a0a0"/>
<path d="M328 673h7l-3.5 4z" fill="#a0a0a0"/>
<path d="M1351 153h7l-3.5-4z" fill="#000"/>
<path d="M1351 675h7l-3.5 4z" fill="#000"/>
<path d="M354.5 690.5v7l-4-3.5z" fill="#a0a0a0"/>
<path d="M1337.5 690.5v7l4-3.5z" fill="#a0a0a0"/>
<!-- tree triangles -->
<path d="M4 122v9l8-4.5z" fill="#000"/>
<path d="M4 138v9l8-4.5z" fill="#fff"/>
<path d="M4 154v9l8-4.5z" fill="#c0c0c0"/>
<path d="M4 170v9l8-4.5z" fill="#000"/>
<!-- checkboxes -->
<g fill="none" stroke-width="1">
<rect x="17.5" y="123.5" width="8" height="8" stroke="#000"/><path d="M18 124l7 7M25 124l-7 7" stroke="#000" stroke-width="0.9"/>
<rect x="17.5" y="139.5" width="8" height="8" stroke="#fff"/><path d="M18 140l7 7M25 140l-7 7" stroke="#fff" stroke-width="0.9"/>
<rect x="17.5" y="155.5" width="8" height="8" stroke="#c8c8c8"/>
<rect x="17.5" y="171.5" width="8" height="8" stroke="#000"/><path d="M18 172l7 7M25 172l-7 7" stroke="#000" stroke-width="0.9"/>
</g>
<!-- canvas drawing -->
<path d="M650.5 262.5V409.5H797.5L768.5 556.5H827.5L797.5 262.5Z" fill="none" stroke="#c8c8c8" stroke-width="1" shape-rendering="crispEdges"/>
<path d="M620 262V409H769L738 556H798L768 262Z" fill="none" stroke="#0000ff" stroke-width="2" shape-rendering="crispEdges"/>
<g fill="#ff0000" shape-rendering="crispEdges"><rect x="589" y="406" width="5" height="2"/><rect x="589" y="411" width="5" height="2"/><rect x="588" y="407" width="2" height="5"/><rect x="593" y="407" width="2" height="5"/><rect x="587" y="409" width="1" height="1"/><rect x="595" y="409" width="1" height="1"/></g>
</svg>
<!-- /ICONS3 -->
</body></html>
